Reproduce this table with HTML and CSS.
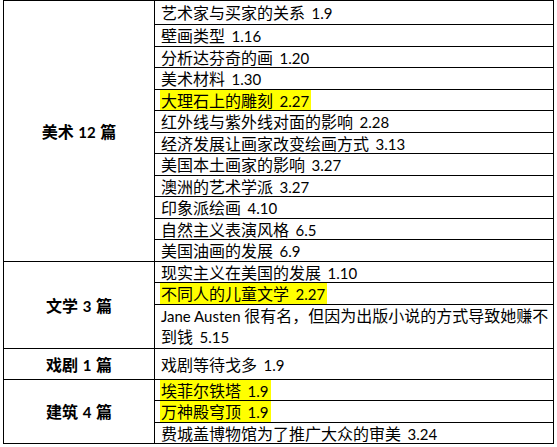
FILE: index.html
```html
<!DOCTYPE html>
<html lang="zh">
<head>
<meta charset="utf-8">
<title>文章分类</title>
<link rel="stylesheet" href="styles.css">
</head>
<body>
<table class="grid">
  <tbody>
    <tr><th rowspan="12" class="cat">美术 <span class="num">12</span> 篇</th><td><div class="ln first">艺术家与买家的关系 <span class="num">1.9</span></div></td></tr>
    <tr><td><div class="ln">壁画类型 <span class="num">1.16</span></div></td></tr>
    <tr><td><div class="ln">分析达芬奇的画 <span class="num">1.20</span></div></td></tr>
    <tr><td><div class="ln">美术材料 <span class="num">1.30</span></div></td></tr>
    <tr><td><div class="ln"><span class="hl">大理石上的雕刻 <span class="num">2.27</span></span></div></td></tr>
    <tr><td><div class="ln">红外线与紫外线对面的影响 <span class="num">2.28</span></div></td></tr>
    <tr><td><div class="ln">经济发展让画家改变绘画方式 <span class="num">3.13</span></div></td></tr>
    <tr><td><div class="ln">美国本土画家的影响 <span class="num">3.27</span></div></td></tr>
    <tr><td><div class="ln">澳洲的艺术学派 <span class="num">3.27</span></div></td></tr>
    <tr><td><div class="ln">印象派绘画 <span class="num">4.10</span></div></td></tr>
    <tr><td><div class="ln">自然主义表演风格 <span class="num">6.5</span></div></td></tr>
    <tr><td><div class="ln">美国油画的发展 <span class="num">6.9</span></div></td></tr>
  </tbody>
  <tbody>
    <tr><th rowspan="3" class="cat">文学 <span class="num">3</span> 篇</th><td><div class="ln">现实主义在美国的发展 <span class="num">1.10</span></div></td></tr>
    <tr><td><div class="ln"><span class="hl">不同人的儿童文学 <span class="num">2.27</span></span></div></td></tr>
    <tr><td><div class="ln two"><span class="lat">Jane Austen</span> 很有名，但因为出版小说的方式导致她赚不<br>到钱 <span class="num">5.15</span></div></td></tr>
  </tbody>
  <tbody>
    <tr><th class="cat">戏剧 <span class="num">1</span> 篇</th><td><div class="ln tall">戏剧等待戈多 <span class="num">1.9</span></div></td></tr>
  </tbody>
  <tbody>
    <tr><th rowspan="3" class="cat">建筑 <span class="num">4</span> 篇</th><td><div class="ln"><span class="hl">埃菲尔铁塔 <span class="num">1.9</span></span></div></td></tr>
    <tr><td><div class="ln"><span class="hl">万神殿穹顶 <span class="num">1.9</span></span></div></td></tr>
    <tr><td><div class="ln">费城盖博物馆为了推广大众的审美 <span class="num">3.24</span></div></td></tr>
  </tbody>
</table>
</body>
</html>
```

FILE: styles.css
```css
html, body {
  margin: 0;
  padding: 0;
  background: #ffffff;
}
body {
  padding-left: 3px;
  font-family: "Noto Sans CJK SC", "Noto Sans", sans-serif;
  font-size: 16px;
  color: #000;
}
.grid {
  border-collapse: collapse;
  width: 551px;
  table-layout: fixed;
}
.grid th, .grid td {
  border: 1px solid #000;
  padding: 0 0 0 6px;
  text-align: left;
  vertical-align: middle;
  white-space: nowrap;
  font-weight: normal;
}
.grid th.cat {
  width: 150px;
  padding: 0;
  text-align: center;
  font-weight: bold;
  line-height: 20px;
}
.ln {
  height: 20.5px;
  line-height: 20.5px;
  overflow: visible;
}
.ln.first {
  height: 23px;
  line-height: 23px;
}
.ln.two {
  height: 43px;
  line-height: 21.5px;
}
.ln.tall {
  height: 30px;
  line-height: 30px;
}
.num {
  font-family: Lato, "Liberation Sans", sans-serif;
  font-size: 15px;
  margin-left: 3px;
  line-height: 1;
}
.cat .num {
  margin: 0 1px;
}
.lat {
  font-family: Lato, "Liberation Sans", sans-serif;
  font-size: 15px;
  line-height: 1;
}
.hl {
  background: #ffff00;
  display: inline-block;
  vertical-align: top;
  height: 20.5px;
  line-height: 20.5px;
  padding: 0 2px 0 1px;
  margin-left: -1px;
}
```
